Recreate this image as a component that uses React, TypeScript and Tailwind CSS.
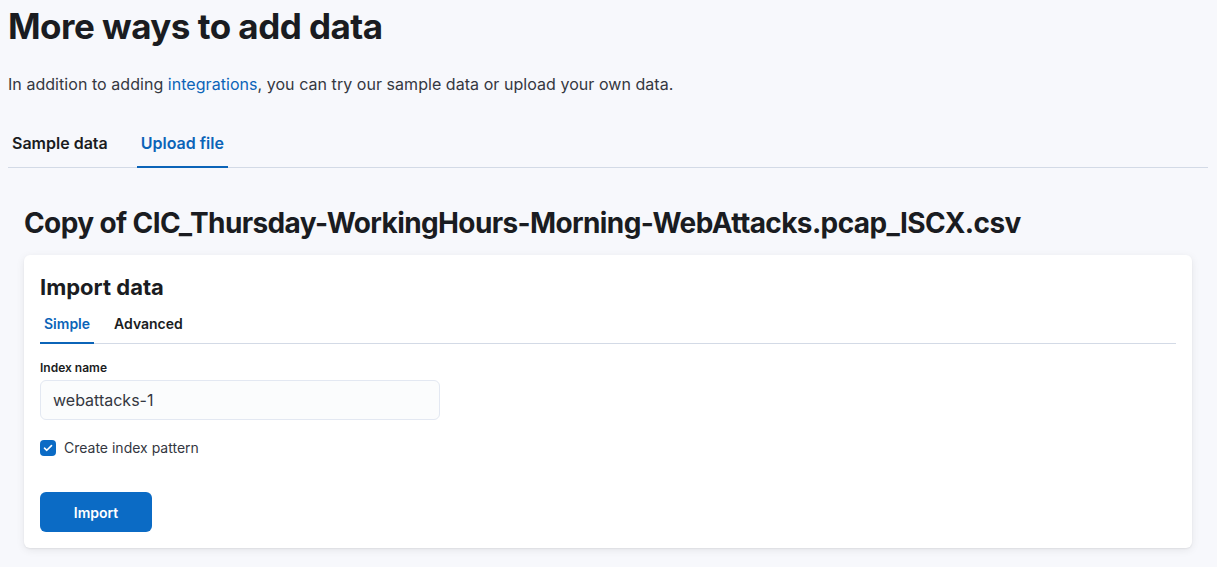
export default function App() {
  return (
    <div className="min-h-[567px] bg-[#f7f8fc] font-['Inter','Liberation_Sans',sans-serif] text-[#1a1c21]">
      <div className="px-2 pt-[4px] pr-[9px]">
        <h1 className="text-[35px] font-bold leading-[44px] tracking-[-0.015em]">More ways to add data</h1>
        <p className="mt-[24px] text-[16px] leading-[24px] tracking-[0.003em] text-[#343741]">
          In addition to adding <a className="text-[#0b64b8]">integrations</a>, you can try our sample data or upload your own data.
        </p>
        <div className="mt-[27px] flex border-b border-[#d3dae6]">
          <div className="px-1 pb-[12px] pt-[8px] text-[16px] font-semibold leading-[24px] text-[#1a1c21]">Sample data</div>
          <div className="-mb-px ml-[25px] border-b-2 border-[#0b64b8] px-1 pb-[10px] pt-[8px] text-[16px] font-semibold leading-[24px] text-[#0b64b8]">
            Upload file
          </div>
        </div>
      </div>
      <div className="px-6 pt-[38px]">
        <h2 className="text-[28px] font-bold leading-[34px] tracking-[-0.022em]">
          Copy of CIC_Thursday-WorkingHours-Morning-WebAttacks.pcap_ISCX.csv
        </h2>
        <div className="mr-[1px] mt-[15px] rounded-md bg-white px-4 pb-4 pt-[18px] shadow-[0_2px_8px_rgba(0,0,0,0.08),0_1px_2px_rgba(0,0,0,0.06)]">
          <h3 className="text-[22px] font-bold leading-[28px]">Import data</h3>
          <div className="mt-[11px] flex border-b border-[#d3dae6]">
            <div className="-mb-px border-b-2 border-[#0b64b8] px-1 pb-[8px] pt-[2px] text-[14px] font-semibold leading-[20px] text-[#0b64b8]">
              Simple
            </div>
            <div className="ml-[16px] px-1 pb-[8px] pt-[2px] text-[14px] font-semibold leading-[20px]">Advanced</div>
          </div>
          <div className="mt-[16px] text-[12px] font-semibold leading-[16px]">Index name</div>
          <div className="mt-[4px] flex h-10 w-[400px] items-center rounded-md border border-[#e3e8f2] bg-[#fbfcfd] px-3 text-[16px] text-[#343741]">
            webattacks-1
          </div>
          <div className="mt-[18px] flex items-center gap-2">
            <div className="flex h-4 w-4 items-center justify-center rounded-[4px] bg-[#0b6bc5]">
              <svg width="10" height="8" viewBox="0 0 10 8" fill="none">
                <path d="M1.5 4.2 L3.8 6.3 L8.5 1.6" stroke="white" strokeWidth="1.6" strokeLinecap="round" strokeLinejoin="round" />
              </svg>
            </div>
            <span className="text-[14px] leading-[20px] text-[#343741]">Create index pattern</span>
          </div>
          <button className="mt-[34px] flex h-10 w-[112px] items-center justify-center rounded-md bg-[#0b6bc5] text-[14px] font-semibold text-white">
            Import
          </button>
        </div>
      </div>
    </div>
  );
}
